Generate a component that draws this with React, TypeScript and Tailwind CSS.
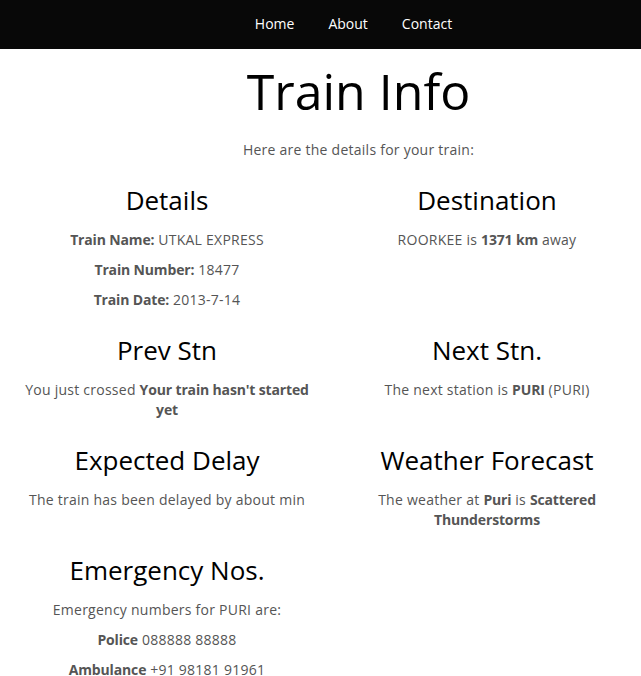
const font = { fontFamily: '"Open Sans", "Liberation Sans", sans-serif' };

const navItems = ["Home", "About", "Contact"];

function Section({ title, children }: { title: string; children: React.ReactNode }) {
  return (
    <div className="text-center">
      <h2 className="mt-[16px] mb-[16px] text-[26px] leading-[28px] font-normal text-black">{title}</h2>
      {children}
    </div>
  );
}

function P({ children }: { children: React.ReactNode }) {
  return <p className="mb-[10px] text-sm leading-5 tracking-[0.25px] text-[#555]">{children}</p>;
}

function B({ children }: { children: React.ReactNode }) {
  return <b className="tracking-[-0.15px]">{children}</b>;
}

export default function App() {
  return (
    <div className="min-h-screen bg-white" style={font}>
      <nav className="h-[49px] bg-[#080808]">
        <ul className="flex h-full items-center justify-center pb-[3px] pl-[66px]">
          {navItems.map((item) => (
            <li key={item}>
              <a href="#" className="px-[17px] text-sm leading-5 text-white">
                {item}
              </a>
            </li>
          ))}
        </ul>
      </nav>

      <div className="pl-[76px] text-center">
        <h1 className="mt-[15px] mb-[21px] text-[50px] leading-[55px] font-normal text-black">Train Info</h1>
        <P>Here are the details for your train:</P>
      </div>

      <div className="grid grid-cols-[292px_292px] gap-x-[28px] pl-[21px]">
        <Section title="Details">
          <P>
            <B>Train Name:</B> UTKAL EXPRESS
          </P>
          <P>
            <B>Train Number:</B> 18477
          </P>
          <P>
            <B>Train Date:</B> 2013-7-14
          </P>
        </Section>
        <Section title="Destination">
          <P>
            ROORKEE is <B>1371 km</B> away
          </P>
        </Section>

        <Section title="Prev Stn">
          <P>
            You just crossed <B>Your train hasn't started yet</B>
          </P>
        </Section>
        <Section title="Next Stn.">
          <P>
            The next station is <B>PURI</B> (PURI)
          </P>
        </Section>

        <Section title="Expected Delay">
          <P>The train has been delayed by about min</P>
        </Section>
        <Section title="Weather Forecast">
          <P>
            The weather at <B>Puri</B> is <B>Scattered Thunderstorms</B>
          </P>
        </Section>

        <Section title="Emergency Nos.">
          <P>Emergency numbers for PURI are:</P>
          <P>
            <B>Police</B> 088888 88888
          </P>
          <P>
            <B>Ambulance</B> +91 98181 91961
          </P>
        </Section>
        <div />
      </div>
    </div>
  );
}
